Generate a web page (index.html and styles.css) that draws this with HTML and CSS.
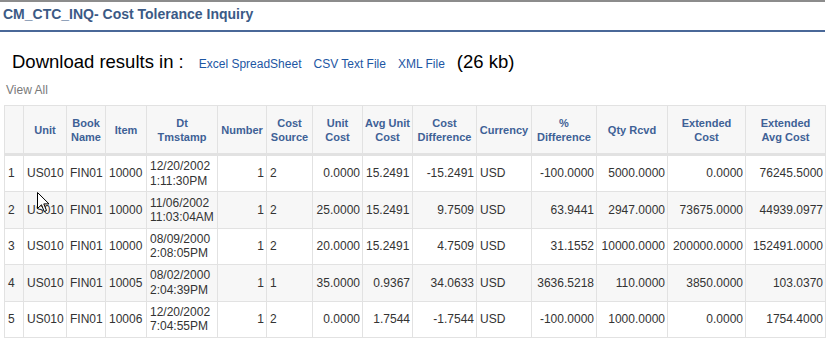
FILE: index.html
```html
<!DOCTYPE html>
<html>
<head>
<meta charset="utf-8">
<link rel="stylesheet" href="styles.css">
</head>
<body>
<div class="page">
  <div class="title">CM_CTC_INQ- Cost Tolerance Inquiry</div>
  <div class="download">
    <span class="dl-label">Download results in :</span>
    <a class="dl-link" href="#">Excel SpreadSheet</a>
    <a class="dl-link" href="#">CSV Text File</a>
    <a class="dl-link" href="#">XML File</a>
    <span class="dl-size">(26 kb)</span>
  </div>
  <div class="viewall">View All</div>
  <table class="grid">
    <colgroup>
      <col style="width:19px"><col style="width:43px"><col style="width:39px"><col style="width:41px"><col style="width:71px"><col style="width:49px"><col style="width:46px"><col style="width:50px"><col style="width:50px"><col style="width:64px"><col style="width:55px"><col style="width:65px"><col style="width:71px"><col style="width:78px"><col style="width:80px">
    </colgroup>
    <thead>
      <tr>
        <th></th><th>Unit</th><th>Book<br>Name</th><th>Item</th><th>Dt<br>Tmstamp</th><th>Number</th><th>Cost<br>Source</th><th>Unit<br>Cost</th><th>Avg Unit<br>Cost</th><th>Cost<br>Difference</th><th>Currency</th><th>%<br>Difference</th><th>Qty Rcvd</th><th>Extended<br>Cost</th><th>Extended<br>Avg Cost</th>
      </tr>
    </thead>
    <tbody>
      <tr>
        <td>1</td><td>US010</td><td>FIN01</td><td>10000</td><td>12/20/2002<br>1:11:30PM</td><td class="r">1</td><td>2</td><td class="r">0.0000</td><td>15.2491</td><td class="r">-15.2491</td><td>USD</td><td class="r">-100.0000</td><td class="r">5000.0000</td><td class="r">0.0000</td><td class="r">76245.5000</td>
      </tr>
      <tr>
        <td>2</td><td>US010</td><td>FIN01</td><td>10000</td><td>11/06/2002<br>11:03:04AM</td><td class="r">1</td><td>2</td><td class="r">25.0000</td><td>15.2491</td><td class="r">9.7509</td><td>USD</td><td class="r">63.9441</td><td class="r">2947.0000</td><td class="r">73675.0000</td><td class="r">44939.0977</td>
      </tr>
      <tr>
        <td>3</td><td>US010</td><td>FIN01</td><td>10000</td><td>08/09/2000<br>2:08:05PM</td><td class="r">1</td><td>2</td><td class="r">20.0000</td><td>15.2491</td><td class="r">4.7509</td><td>USD</td><td class="r">31.1552</td><td class="r">10000.0000</td><td class="r">200000.0000</td><td class="r">152491.0000</td>
      </tr>
      <tr>
        <td>4</td><td>US010</td><td>FIN01</td><td>10005</td><td>08/02/2000<br>2:04:39PM</td><td class="r">1</td><td>1</td><td class="r">35.0000</td><td class="r">0.9367</td><td class="r">34.0633</td><td>USD</td><td class="r">3636.5218</td><td class="r">110.0000</td><td class="r">3850.0000</td><td class="r">103.0370</td>
      </tr>
      <tr>
        <td>5</td><td>US010</td><td>FIN01</td><td>10006</td><td>12/20/2002<br>7:04:55PM</td><td class="r">1</td><td>2</td><td class="r">0.0000</td><td class="r">1.7544</td><td class="r">-1.7544</td><td>USD</td><td class="r">-100.0000</td><td class="r">1000.0000</td><td class="r">0.0000</td><td class="r">1754.4000</td>
      </tr>
    </tbody>
  </table>
  <svg class="cursor" width="13" height="21" viewBox="0 0 13 21">
    <path d="M0.5 0.5 L0.5 16.5 L4.5 12.8 L7.2 19.5 L9.5 18.5 L6.8 11.9 L12 11.9 Z" fill="#fff" stroke="#000" stroke-width="1" stroke-linejoin="miter"/>
  </svg>
</div>
</body>
</html>
```
FILE: styles.css
```css
html, body {
  margin: 0;
  padding: 0;
  background: #fff;
}
.page {
  position: relative;
  width: 825px;
  border-top: 2px solid #8c8c8c;
  font-family: "Liberation Sans", Arial, sans-serif;
  color: #333;
}
.title {
  height: 26px;
  padding: 2px 3px 0;
  line-height: 20px;
  font-size: 14px;
  font-weight: bold;
  color: #3b5a86;
  border-bottom: 2px solid #4a6898;
}
.download {
  display: flex;
  align-items: baseline;
  padding-left: 12px;
  margin-top: 17px;
  height: 26px;
  line-height: 26px;
}
.dl-label {
  font-size: 18.5px;
  color: #000;
  margin-right: 15px;
}
.dl-link {
  font-size: 12px;
  color: #1d56a3;
  text-decoration: none;
  margin-right: 12px;
}
.dl-size {
  font-size: 18.5px;
  color: #000;
}
.viewall {
  font-size: 12px;
  color: #7a7a7a;
  padding-left: 6px;
  margin-top: 7px;
  line-height: 16px;
}
.grid {
  margin: 7px 0 0 4px;
  border-collapse: collapse;
  table-layout: fixed;
  width: 821px;
  font-size: 12px;
}
.grid th, .grid td {
  border: 1px solid #e2e2e2;
  vertical-align: middle;
  overflow: hidden;
  white-space: nowrap;
}
.grid th {
  background: #f7f7f7;
  color: #3e6196;
  font-size: 11px;
  font-weight: bold;
  line-height: 14px;
  text-align: center;
  height: 43px;
  padding: 2px 1px;
  border-bottom: 3px solid #e2e2e2;
}
.grid td {
  color: #333;
  line-height: 14.5px;
  padding: 0 2px 0 3px;
  height: 35.4px;
  text-align: left;
}
.grid td.r {
  text-align: right;
}
.grid tbody tr:nth-child(even) td {
  background: #f7f7f7;
}
.cursor {
  position: absolute;
  left: 37px;
  top: 190px;
}
```
